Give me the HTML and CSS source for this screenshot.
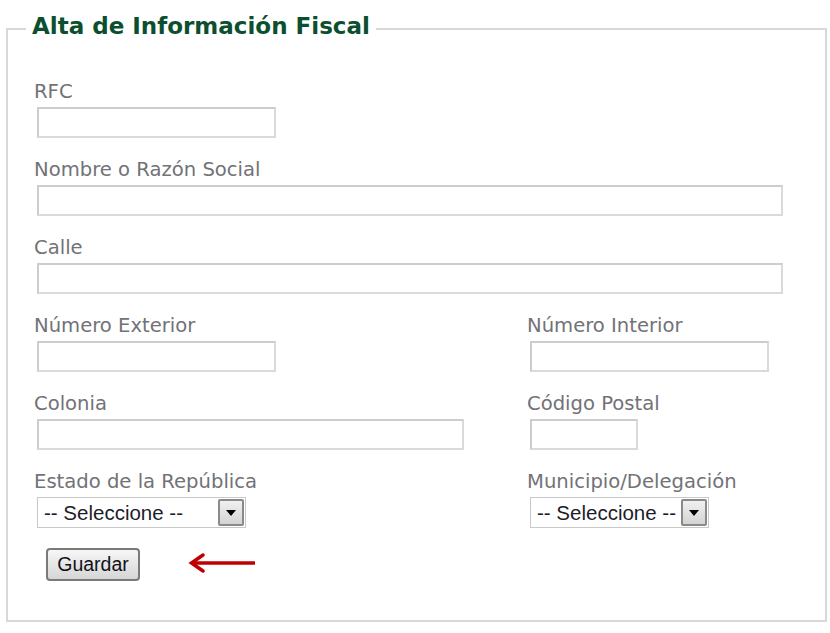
FILE: index.html
```html
<!DOCTYPE html>
<html lang="es">
<head>
<meta charset="utf-8">
<title>Alta de Información Fiscal</title>
<link rel="stylesheet" href="styles.css">
</head>
<body>
<div class="page">
  <fieldset class="card">
    <legend class="card-title">Alta de Información Fiscal</legend>

    <div class="row">
      <div class="field">
        <label class="label" for="rfc">RFC</label>
        <input class="input w-sm" id="rfc" type="text">
      </div>
    </div>

    <div class="row">
      <div class="field">
        <label class="label" for="nombre">Nombre o Razón Social</label>
        <input class="input w-full" id="nombre" type="text">
      </div>
    </div>

    <div class="row">
      <div class="field">
        <label class="label" for="calle">Calle</label>
        <input class="input w-full" id="calle" type="text">
      </div>
    </div>

    <div class="row cols">
      <div class="field">
        <label class="label" for="numext">Número Exterior</label>
        <input class="input w-sm" id="numext" type="text">
      </div>
      <div class="field">
        <label class="label" for="numint">Número Interior</label>
        <input class="input w-sm" id="numint" type="text">
      </div>
    </div>

    <div class="row cols">
      <div class="field">
        <label class="label" for="colonia">Colonia</label>
        <input class="input w-md" id="colonia" type="text">
      </div>
      <div class="field">
        <label class="label" for="cp">Código Postal</label>
        <input class="input w-xs" id="cp" type="text">
      </div>
    </div>

    <div class="row cols">
      <div class="field">
        <span class="label">Estado de la República</span>
        <div class="select sel-lg" role="combobox" aria-expanded="false">
          <span class="select-text">-- Seleccione --</span>
          <span class="select-btn"><svg width="10" height="6" viewBox="0 0 10 6"><path d="M0 0H10L5 6Z" fill="#000"/></svg></span>
        </div>
      </div>
      <div class="field">
        <span class="label">Municipio/Delegación</span>
        <div class="select sel-md" role="combobox" aria-expanded="false">
          <span class="select-text">-- Seleccione --</span>
          <span class="select-btn"><svg width="10" height="6" viewBox="0 0 10 6"><path d="M0 0H10L5 6Z" fill="#000"/></svg></span>
        </div>
      </div>
    </div>

    <div class="actions">
      <button class="btn" type="button">Guardar</button>
      <svg class="pointer" width="68" height="20" viewBox="0 0 68 20">
        <path d="M67 10H5" stroke="#c00000" stroke-width="3.5" fill="none"/>
        <path d="M15 2L3.5 10L15 18" stroke="#c00000" stroke-width="3.5" fill="none" stroke-linecap="round"/>
      </svg>
    </div>
  </fieldset>
</div>
</body>
</html>
```

FILE: styles.css
```css
html, body {
  margin: 0;
  padding: 0;
  background: #ffffff;
}

body {
  font-family: "DejaVu Sans", Verdana, sans-serif;
}

.page {
  padding: 12px 3px 0 6px;
}

.card {
  margin: 0;
  border: 2px solid #d8d8d8;
  padding: 34px 0 39px 26px;
  min-width: 0;
}

.card-title {
  margin-left: -8px;
  padding: 0 6px 6px;
  font-weight: bold;
  font-size: 23px;
  line-height: 28px;
  color: #0c4f2e;
}

.row {
  margin-bottom: 20px;
}

.row.cols {
  display: grid;
  grid-template-columns: 493px 1fr;
}

.field {
  display: flex;
  flex-direction: column;
  align-items: flex-start;
}

.label {
  display: block;
  font-size: 19.6px;
  line-height: 23px;
  color: #727277;
}

.input {
  display: block;
  box-sizing: border-box;
  height: 31px;
  margin: 4px 0 0 3px;
  padding: 0 4px;
  border: 2px solid;
  border-color: #cdcdcd #dadada #dadada #cdcdcd;
  background: #fff;
  font: 18px "Liberation Sans", Arial, sans-serif;
}

.w-sm { width: 239px; }
.w-full { width: 746px; }
.w-md { width: 427px; }
.w-xs { width: 108px; }

.select {
  display: flex;
  align-items: stretch;
  box-sizing: border-box;
  height: 31px;
  margin: 4px 0 0 3px;
  border: 1px solid #c9c9c9;
  background: #fff;
}

.sel-lg { width: 209px; }
.sel-md { width: 179px; }

.select-text {
  flex: 1;
  display: flex;
  align-items: center;
  padding-left: 6px;
  font: 20.5px "Liberation Sans", Arial, sans-serif;
  color: #1d1d2a;
  white-space: nowrap;
  overflow: hidden;
}

.select-btn {
  display: flex;
  align-items: center;
  justify-content: center;
  box-sizing: border-box;
  width: 26px;
  margin: 1px;
  border: 2px solid #8a8a8a;
  border-radius: 2px;
  background: linear-gradient(#f0f0f0, #d4d4d4);
}

.actions {
  display: flex;
  align-items: center;
  gap: 48px;
  margin-top: 1px;
  padding-left: 12px;
}

.btn {
  box-sizing: border-box;
  width: 94px;
  height: 33px;
  padding: 0;
  border: 2px solid #7a7a7a;
  border-radius: 4px;
  background: linear-gradient(#f7f7f7, #e6e6e6 50%, #d6d6d6);
  font: 19.5px "Liberation Sans", Arial, sans-serif;
  color: #121218;
}

.pointer {
  display: block;
  margin-top: -3px;
}
```
